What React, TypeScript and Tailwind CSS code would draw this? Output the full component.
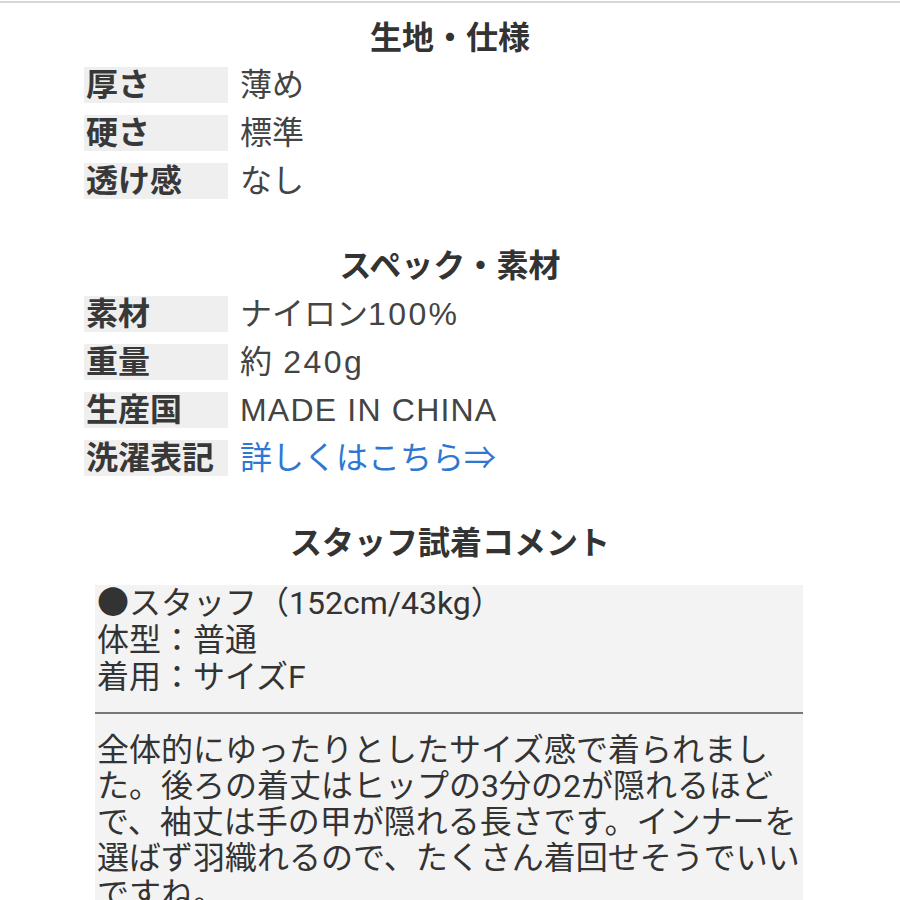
const fabric = [
  { label: "厚さ", value: "薄め" },
  { label: "硬さ", value: "標準" },
  { label: "透け感", value: "なし" },
];

const spec = [
  { label: "素材", value: "ナイロン100%" },
  { label: "重量", value: "約 240g" },
  { label: "生産国", value: "MADE IN CHINA" },
  { label: "洗濯表記", value: "詳しくはこちら⇒", link: true },
];

type Row = { label: string; value: string; link?: boolean };

// latin runs in the reference font sit a bit wider than Liberation Sans
function Value({ text }: { text: string }) {
  return (
    <>
      {text.split(/([A-Za-z0-9% ]+)/).map((part, i) =>
        /^[0-9% ]*[0-9%][0-9%a-z ]*$/.test(part) ? (
          <span key={i} className="tracking-[2.4px]">
            {part}
          </span>
        ) : /[A-Z]/.test(part) ? (
          <span key={i} className="tracking-[1.2px]">
            {part}
          </span>
        ) : (
          <span key={i}>{part}</span>
        )
      )}
    </>
  );
}

function SpecTable({ rows }: { rows: Row[] }) {
  return (
    <div className="flex flex-col gap-[12px] pl-[84px]">
      {rows.map((row) => (
        <div key={row.label} className="flex items-center h-[36px]">
          <div className="w-[144px] h-full bg-[#efefef] pl-[2px] flex items-center font-bold text-[#383838] text-[32px] leading-[36px]">
            {row.label}
          </div>
          <div
            className={`ml-[12px] text-[32px] leading-[36px] ${
              row.link ? "text-[#2f78d2]" : "text-[#444]"
            }`}
          >
            <Value text={row.value} />
          </div>
        </div>
      ))}
    </div>
  );
}

function Heading({ children }: { children: string }) {
  return (
    <h2 className="text-center font-bold text-[32px] leading-[36px] text-[#333]">
      {children}
    </h2>
  );
}

export default function App() {
  return (
    <div
      className="w-[900px] h-[900px] overflow-hidden bg-white pt-px"
      style={{ fontFamily: '"Liberation Sans", "Noto Sans CJK JP", sans-serif' }}
    >
      <div className="h-[2px] bg-[#d6d6d6]" />

      <div className="mt-[17px]">
        <Heading>生地・仕様</Heading>
      </div>
      <div className="mt-[11px]">
        <SpecTable rows={fabric} />
      </div>

      <div className="mt-[49px]">
        <Heading>スペック・素材</Heading>
      </div>
      <div className="mt-[12px]">
        <SpecTable rows={spec} />
      </div>

      <div className="mt-[49px]">
        <Heading>スタッフ試着コメント</Heading>
      </div>

      <div
        className="mt-[24px] ml-[95px] w-[708px] bg-[#f3f3f3] text-[#333] text-[32px]"
        style={{ fontFamily: 'Roboto, "Noto Sans CJK JP", sans-serif' }}
      >
        <div className="pl-[2px] pb-[16px] leading-[37px] border-b-2 border-[#777]">
          <p>●スタッフ（152cm/43kg）</p>
          <p>体型：普通</p>
          <p>着用：サイズF</p>
        </div>
        <p className="pl-[2px] pr-px pt-[18px] leading-[36px]">
          全体的にゆったりとしたサイズ感で着られました。後ろの着丈はヒップの3分の2が隠れるほどで、袖丈は手の甲が隠れる長さです。インナーを選ばず羽織れるので、たくさん着回せそうでいいですね。
        </p>
      </div>
    </div>
  );
}
